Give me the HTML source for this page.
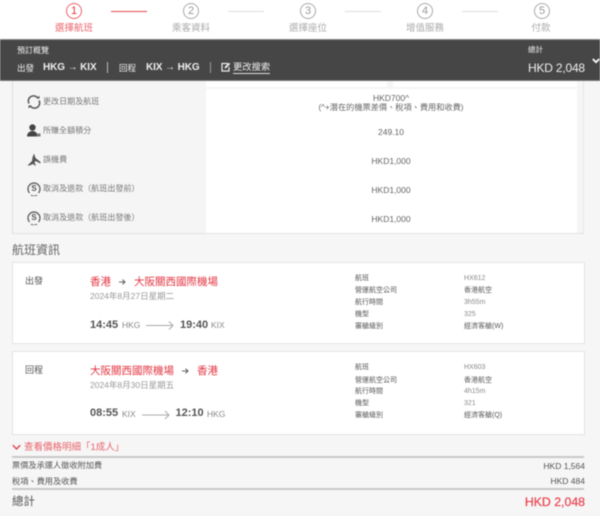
<!DOCTYPE html>
<html lang="zh-Hant"><head><meta charset="utf-8"><style>
html,body{margin:0;padding:0}
body{width:600px;height:516px;overflow:hidden;background:#f6f6f6;position:relative;font-family:"Liberation Sans","Noto Sans CJK TC",sans-serif;color:#555}
#w{position:absolute;left:0;top:0;width:600px;height:516px;filter:blur(.45px)}
.a{position:absolute;white-space:nowrap}
.t{position:absolute;white-space:nowrap;line-height:14px;transform:translateY(-7px)}
.r{position:absolute;white-space:nowrap;line-height:14px;transform:translate(-100%,-7px)}
.c{position:absolute;white-space:nowrap;line-height:14px;transform:translate(-50%,-7px);text-align:center}
.k{width:14px;height:14px;border:1px solid #aaa;border-radius:50%;position:absolute;text-align:center;line-height:14px;font-size:11px;color:#999;background:#fff}
.l{position:absolute;height:1px;background:#ddd;width:36px;top:11px}
.g{color:#aaa;font-size:9.500px}
.m{color:#555;font-size:7px}
.b{position:absolute;left:12px;width:571px;background:#fff;border:1px solid #e3e3e3;box-sizing:content-box}
.rd{color:#e2333f}
.tm{font-size:11px;font-weight:bold;color:#555}
.cd{font-size:8.500px;color:#888}
.p{font-size:8px;color:#777;letter-spacing:.05px}
.v{font-size:8.500px;color:#666}
</style></head><body><div id="w">
<div class="a" style="left:0;top:0;width:600px;height:39px;background:#fff"></div>
<div class="k" style="left:66px;top:3px;border-color:#e8636b;color:#e2333f">1</div>
<div class="k" style="left:183px;top:3px">2</div>
<div class="k" style="left:300px;top:3px">3</div>
<div class="k" style="left:417px;top:3px">4</div>
<div class="k" style="left:534px;top:3px">5</div>
<div class="l" style="left:111px;background:#e2474f"></div>
<div class="l" style="left:228px"></div>
<div class="l" style="left:345px"></div>
<div class="l" style="left:462px"></div>
<div class="c rd" style="left:74px;top:29px;font-size:9.500px;color:#e8636b">選擇航班</div>
<div class="c g" style="left:191px;top:29px;">乘客資料</div>
<div class="c g" style="left:308px;top:29px;">選擇座位</div>
<div class="c g" style="left:425px;top:29px;">增值服務</div>
<div class="c g" style="left:541px;top:29px;">付款</div>

<div class="a" style="left:0;top:39px;width:600px;height:42px;background:#464646;border-top:1px solid #8a8a8a;border-bottom:1px solid #777;box-sizing:border-box"></div>
<div class="t" style="left:17px;top:51px;font-size:8px;color:#eee">預訂概覽</div>
<div class="t" style="left:17px;top:68px;font-size:8.500px;color:#eee">出發</div>
<div class="t" style="left:43px;top:67.500px;font-size:10px;color:#eee;font-weight:bold;letter-spacing:-.1px">HKG → KIX</div>
<div class="a" style="left:107px;top:62px;width:1px;height:11px;background:#bbb"></div>
<div class="t" style="left:119px;top:68px;font-size:8.500px;color:#eee">回程</div>
<div class="t" style="left:146px;top:67.500px;font-size:10px;color:#eee;font-weight:bold;letter-spacing:-.1px">KIX → HKG</div>
<div class="a" style="left:210px;top:62px;width:1px;height:11px;background:#999"></div>
<svg class="a" style="left:221px;top:62px" width="10" height="10" viewBox="0 0 10 10"><path d="M7 1.500H1v7.500h7V5" fill="none" stroke="#eee" stroke-width="1.200"/><path d="M3.500 6.500l.5-2L8 .8l1.200 1.200L5.500 5.900z" fill="#eee"/></svg>
<div class="t" style="left:233px;top:67px;font-size:9.300px;color:#eee;border-bottom:1px solid #ddd;line-height:12px;transform:translateY(-6px)">更改搜索</div>
<div class="t" style="left:528px;top:49.500px;font-size:7.500px;color:#eee">總計</div>
<div class="t" style="left:528px;top:68px;font-size:12px;color:#eee;letter-spacing:-.2px">HKD 2,048</div>
<svg class="a" style="left:592px;top:58px" width="8" height="6" viewBox="0 0 8 6"><path d="M.8 1l3.200 3.200L7.200 1" fill="none" stroke="#fff" stroke-width="1.800"/></svg>

<div class="a" style="left:12px;top:81px;width:572px;height:153px;background:#f5f5f5;border-left:1px solid #ddd;border-right:1px solid #e4e4e4;border-bottom:1px solid #e2e2e2;box-sizing:border-box"></div>
<div class="a" style="left:206px;top:81px;width:181px;height:6px;background:#fff"></div>
<div class="a" style="left:393px;top:81px;width:184px;height:6px;background:#fff"></div>
<div class="a" style="left:206px;top:89px;width:371px;height:144px;background:#fff"></div>

<svg class="a" style="left:27px;top:95px" width="14" height="14" viewBox="0 0 14 14"><path d="M2 8.500A5 5 0 0 1 11 3.500M12 5.500A5 5 0 0 1 3 10.500" fill="none" stroke="#555" stroke-width="1.500"/><path d="M9.500 3.500h3v-3zM4.500 10.500h-3v3z" fill="#555"/></svg>
<svg class="a" style="left:27px;top:124px" width="14" height="13" viewBox="0 0 14 13"><circle cx="5.500" cy="3.500" r="3.200" fill="#444"/><path d="M0 12.500c0-3.500 2.500-5.500 5.500-5.500s5 2 5.500 5.500z" fill="#444"/><path d="M9.500 9.500h4v3h-4z" fill="#777"/></svg>
<svg class="a" style="left:27px;top:153px" width="14" height="13" viewBox="0 0 14 13"><path d="M7 .5l1.500 4.500 5 4v1.500l-5-2.500-1 1.500 1.500 3h-1L6 11 2.500 12.500H.5L5 8 5.500 4.500z" fill="#555"/></svg>
<svg class="a" style="left:27px;top:182px" width="14" height="14" viewBox="0 0 14 14"><path d="M2.500 11A6 6 0 1 1 11.500 11" fill="none" stroke="#555" stroke-width="1.200"/><path d="M4 13.200A6 6 0 0 0 10 13.200" fill="none" stroke="#555" stroke-width="1"/></svg>
<div class="c" style="left:34px;top:189px;font-size:8px;font-weight:bold;color:#555">S</div>
<svg class="a" style="left:27px;top:211px" width="14" height="14" viewBox="0 0 14 14"><path d="M2.500 11A6 6 0 1 1 11.500 11" fill="none" stroke="#555" stroke-width="1.200"/><path d="M4 13.200A6 6 0 0 0 10 13.200" fill="none" stroke="#555" stroke-width="1"/></svg>
<div class="c" style="left:34px;top:218px;font-size:8px;font-weight:bold;color:#555">S</div>

<div class="t p" style="left:43px;top:102px">更改日期及航班</div>
<div class="t p" style="left:43px;top:131px">所賺全額積分</div>
<div class="t p" style="left:43px;top:160px">誤機費</div>
<div class="t p" style="left:43px;top:189px">取消及退款（航班出發前）</div>
<div class="t p" style="left:43px;top:218px">取消及退款（航班出發後）</div>

<div class="c v" style="left:391px;top:97.500px">HKD700^</div>
<div class="c" style="left:391px;top:108px;font-size:8.200px;color:#666">(^+潛在的機票差價、稅項、費用和收費)</div>
<div class="c v" style="left:391px;top:132px">249.10</div>
<div class="c v" style="left:391px;top:161px">HKD1,000</div>
<div class="c v" style="left:391px;top:190px">HKD1,000</div>
<div class="c v" style="left:391px;top:219px">HKD1,000</div>

<div class="t" style="left:12px;top:250px;font-size:12px;color:#666">航班資訊</div>

<div class="b" style="top:262px;height:80px"></div>
<div class="b" style="top:351px;height:82px"></div>

<div class="t" style="left:25px;top:281px;font-size:9px;color:#555">出發</div>
<div class="t rd" style="left:90px;top:281.500px;font-size:10.500px">香港</div>
<svg class="a" style="left:119px;top:279px" width="7" height="6" viewBox="0 0 7 6"><path d="M0 3h6M3.500 .7L6 3 3.500 5.300" fill="none" stroke="#666" stroke-width="1.100"/></svg>
<div class="t rd" style="left:134px;top:281.500px;font-size:10.500px">大阪關西國際機場</div>
<div class="t" style="left:90px;top:296px;font-size:8.500px;color:#999">2024年8月27日星期二</div>
<div class="t tm" style="left:90px;top:324.500px">14:45</div>
<div class="t cd" style="left:122px;top:325px">HKG</div>
<svg class="a" style="left:146px;top:320px" width="28" height="10" viewBox="0 0 28 10"><path d="M0 5.500h27M23 1.500l4 4-4 4" fill="none" stroke="#aaa" stroke-width="1"/></svg>
<div class="t tm" style="left:180px;top:324.500px">19:40</div>
<div class="t cd" style="left:211px;top:325px">KIX</div>

<div class="t" style="left:25px;top:370px;font-size:9px;color:#555">回程</div>
<div class="t rd" style="left:90px;top:370.500px;font-size:10.500px">大阪關西國際機場</div>
<svg class="a" style="left:182px;top:368px" width="7" height="6" viewBox="0 0 7 6"><path d="M0 3h6M3.500 .7L6 3 3.500 5.300" fill="none" stroke="#666" stroke-width="1.100"/></svg>
<div class="t rd" style="left:197px;top:370.500px;font-size:10.500px">香港</div>
<div class="t" style="left:90px;top:385px;font-size:8.500px;color:#999">2024年8月30日星期五</div>
<div class="t tm" style="left:90px;top:413px">08:55</div>
<div class="t cd" style="left:122px;top:414px">KIX</div>
<svg class="a" style="left:142px;top:410px" width="28" height="10" viewBox="0 0 28 10"><path d="M0 5h27M23 1l4 4-4 4" fill="none" stroke="#aaa" stroke-width="1"/></svg>
<div class="t tm" style="left:175.500px;top:413px">12:10</div>
<div class="t cd" style="left:207px;top:414px">HKG</div>

<div class="t m" style="left:355px;top:279px">航班</div>
<div class="t m" style="left:355px;top:291px">營運航空公司</div>
<div class="t m" style="left:355px;top:303px">航行時間</div>
<div class="t m" style="left:355px;top:315px">機型</div>
<div class="t m" style="left:355px;top:327px">審艙級別</div>
<div class="t m" style="left:464px;top:279px;color:#888">HX612</div>
<div class="t m" style="left:464px;top:291px">香港航空</div>
<div class="t m" style="left:464px;top:303px;color:#888">3h55m</div>
<div class="t m" style="left:464px;top:315px;color:#888">325</div>
<div class="t m" style="left:464px;top:327px">經濟客艙(W)</div>

<div class="t m" style="left:355px;top:368px">航班</div>
<div class="t m" style="left:355px;top:381px">營運航空公司</div>
<div class="t m" style="left:355px;top:392px">航行時間</div>
<div class="t m" style="left:355px;top:404px">機型</div>
<div class="t m" style="left:355px;top:416px">審艙級別</div>
<div class="t m" style="left:464px;top:368px;color:#888">HX603</div>
<div class="t m" style="left:464px;top:381px">香港航空</div>
<div class="t m" style="left:464px;top:392px;color:#888">4h15m</div>
<div class="t m" style="left:464px;top:404px;color:#888">321</div>
<div class="t m" style="left:464px;top:416px">經濟客艙(Q)</div>

<svg class="a" style="left:12px;top:444px" width="9" height="7" viewBox="0 0 9 7"><path d="M.8 1.200l3.700 3.800 3.700-3.800" fill="none" stroke="#e2333f" stroke-width="1.300"/></svg>
<div class="t" style="left:24px;top:448px;font-size:9.500px;color:#e8636b">查看價格明細「1成人」</div>
<div class="a" style="left:12px;top:456px;width:572px;height:2px;background:#c8c8c8"></div>
<div class="t" style="left:12px;top:466px;font-size:8.200px;color:#555">票價及承運人徵收附加費</div>
<div class="r" style="left:585px;top:465.500px;font-size:8.500px;color:#555">HKD 1,564</div>
<div class="t" style="left:12px;top:481.500px;font-size:8.200px;color:#555">稅項、費用及收費</div>
<div class="r" style="left:585px;top:481px;font-size:8.500px;color:#555">HKD 484</div>
<div class="a" style="left:12px;top:488px;width:572px;height:2px;background:#c8c8c8"></div>
<div class="t" style="left:12px;top:502px;font-size:11.500px;color:#555">總計</div>
<div class="r rd" style="left:585px;top:502px;font-size:12.300px;font-weight:normal;color:#e8404c;-webkit-text-stroke:.2px #e8404c">HKD 2,048</div>
</div></body></html>
